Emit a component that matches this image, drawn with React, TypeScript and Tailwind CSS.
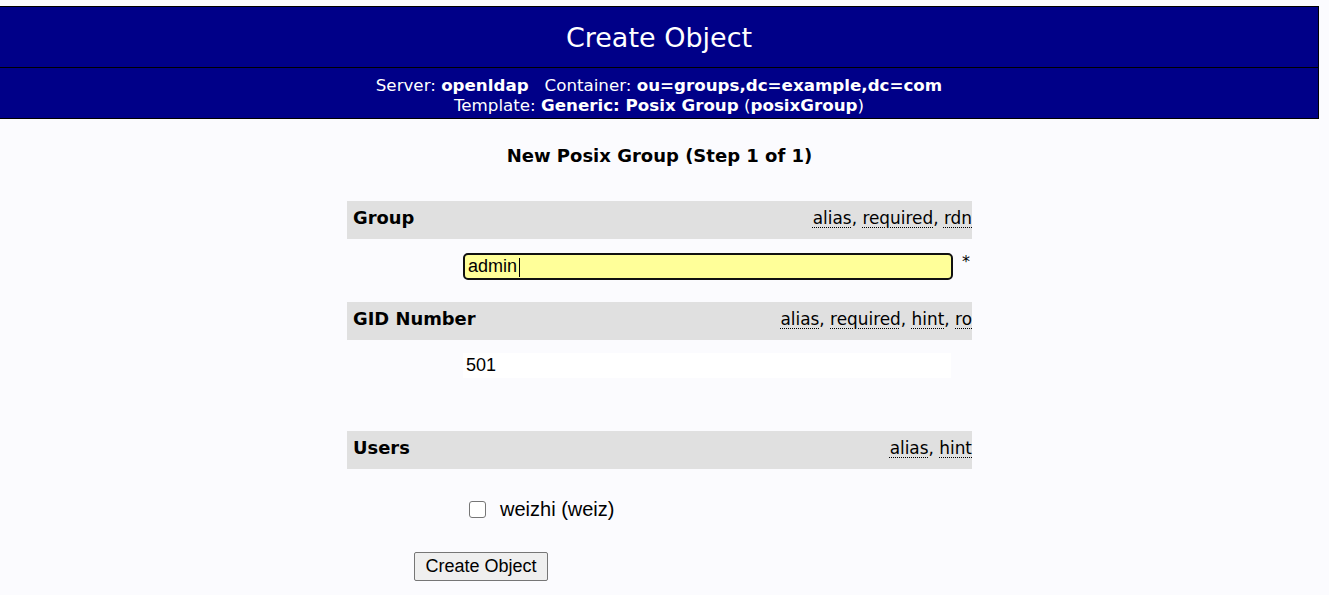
import React from "react"

const verdana = { fontFamily: '"DejaVu Sans", Verdana, sans-serif' }
const arial = { fontFamily: '"Liberation Sans", Arial, sans-serif' }

function Hints({ items }: { items: string[] }) {
  return (
    <div className="ml-auto whitespace-nowrap text-[16.9px]">
      {items.map((h, i) => (
        <span key={h}>
          <span className="underline decoration-dotted decoration-1 underline-offset-[3px]">{h}</span>
          {i < items.length - 1 && ", "}
        </span>
      ))}
    </div>
  )
}

function SectionHead({ label, hints }: { label: string; hints: string[] }) {
  return (
    <div className="flex h-[38px] items-center bg-[#e0e0e0] pb-[3px] pl-[6px] text-black">
      <span className="text-[17.9px] font-bold">{label}</span>
      <Hints items={hints} />
    </div>
  )
}

export default function App() {
  return (
    <div className="min-h-screen bg-[#fbfbfe] text-black" style={verdana}>
      <div className="pt-[6px]">
        <div className="w-[1319px] border-y border-r border-black bg-[#000088] text-white">
          <div className="flex h-[60px] items-center justify-center pt-[3px] text-[27px]">Create Object</div>
          <div className="h-[51px] border-t border-black pt-[7px] text-center text-[16.7px] leading-[20px]">
            <div>
              Server: <b>openldap</b>&nbsp;&nbsp; Container: <b>ou=groups,dc=example,dc=com</b>
            </div>
            <div>
              Template: <b>Generic: Posix Group</b> (<b>posixGroup</b>)
            </div>
          </div>
        </div>
      </div>

      <div className="flex w-[1319px] flex-col items-center">
        <h3 className="mt-[26px] text-[18px] font-bold leading-[22px]">New Posix Group (Step 1 of 1)</h3>

        <div className="mt-[34px] w-[625px]">
          <SectionHead label="Group" hints={["alias", "required", "rdn"]} />
          <div className="flex items-start pb-[22px] pl-[116px] pt-[14px]">
            <div className="relative h-[27px] w-[490px] rounded-[5px] border-2 border-[#111] bg-[#ffff99]">
              <input
                defaultValue="admin"
                className="h-full w-full bg-transparent pl-[3px] text-[18px] leading-[23px] outline-none"
                style={arial}
              />
              <span className="absolute left-[54px] top-[3px] h-[19px] w-px bg-black" />
            </div>
            <span className="ml-[9px] text-[16px] leading-[18px]">*</span>
          </div>

          <SectionHead label="GID Number" hints={["alias", "required", "hint", "ro"]} />
          <div className="pb-[53px] pl-[116px] pt-[13px]">
            <div className="flex h-[25px] w-[488px] items-center bg-white pl-[3px] text-[18px]" style={arial}>
              501
            </div>
          </div>

          <SectionHead label="Users" hints={["alias", "hint"]} />
          <div className="flex items-center pl-[122px] pt-[29px]" style={arial}>
            <span className="h-[17px] w-[17px] rounded-[3px] border border-[#767676] bg-white" />
            <span className="ml-[14px] text-[20px] leading-[22px]">weizhi (weiz)</span>
          </div>

          <div className="pl-[67px] pt-[32px]">
            <button
              className="h-[29px] w-[134px] rounded-[2px] border border-[#767676] bg-[#efefef] text-[18px] text-black"
              style={arial}
            >
              Create Object
            </button>
          </div>
        </div>
      </div>
    </div>
  )
}
